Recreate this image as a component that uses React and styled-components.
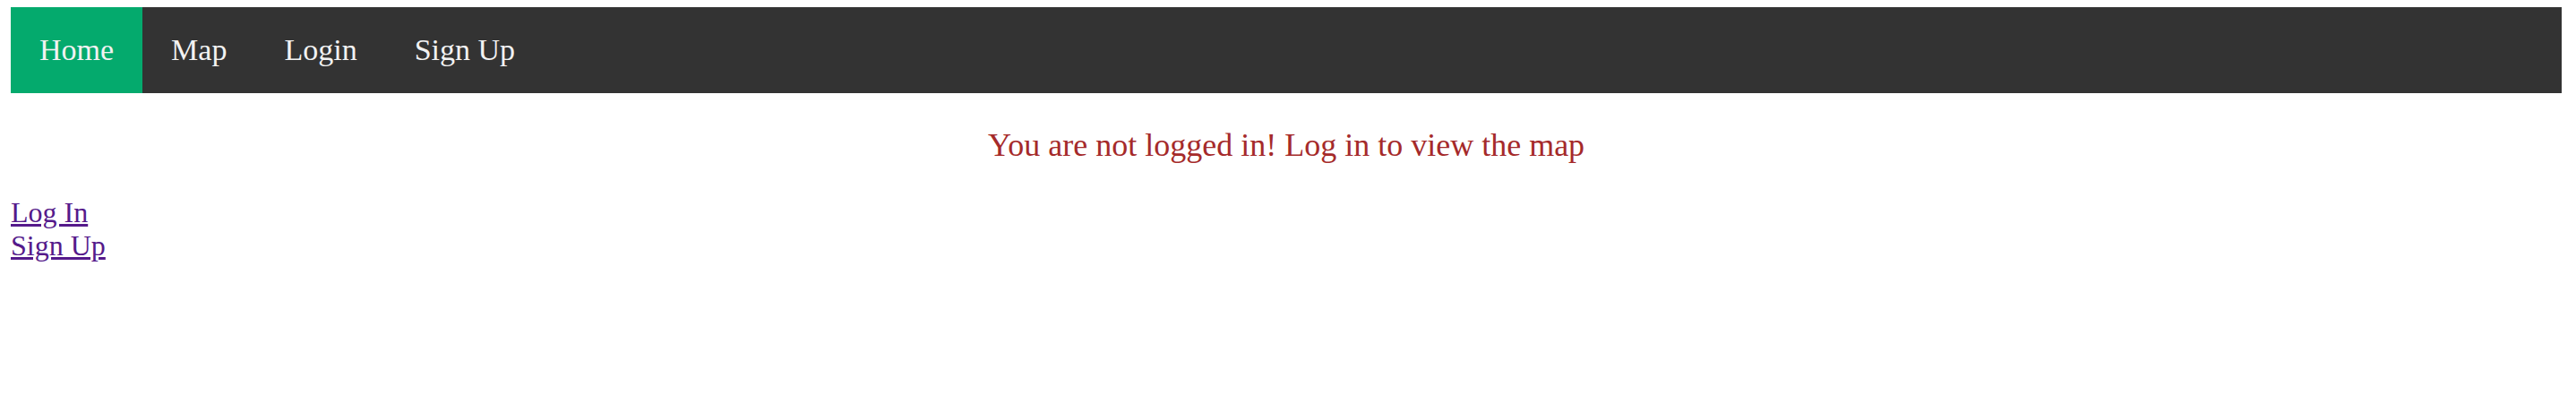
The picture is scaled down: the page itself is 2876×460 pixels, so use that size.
import React from 'react';
import styled, { createGlobalStyle } from 'styled-components';

const GlobalStyle = createGlobalStyle`
    body {
        margin: 8px 16px 8px 12px;
        font-family: "Liberation Serif", "Times New Roman", serif;
        background: #fff;
    }
`;

const TopNav = styled.nav`
    display: flex;
    background-color: #333;
    overflow: hidden;
`;

const NavLink = styled.a`
    display: block;
    color: #f2f2f2;
    text-align: center;
    padding: 28px 32px;
    text-decoration: none;
    font-size: 34px;
    line-height: 40px;
    background-color: ${props => (props.active ? '#04AA6D' : 'transparent')};
    cursor: pointer;
`;

const Notice = styled.p`
    color: brown;
    text-align: center;
    font-size: 36px;
    margin: 37px 0 36px;
`;

const Links = styled.div`
    display: flex;
    flex-direction: column;
    align-items: flex-start;
    a {
        font-size: 32px;
        color: #551a8b;
        text-decoration: underline;
    }
`;

export default function App() {
    return (
        <>
            <GlobalStyle />
            <TopNav>
                <NavLink active>Home</NavLink>
                <NavLink>Map</NavLink>
                <NavLink>Login</NavLink>
                <NavLink>Sign Up</NavLink>
            </TopNav>
            <Notice>You are not logged in! Log in to view the map</Notice>
            <Links>
                <a href="#login">Log In</a>
                <a href="#signup">Sign Up</a>
            </Links>
        </>
    );
}
